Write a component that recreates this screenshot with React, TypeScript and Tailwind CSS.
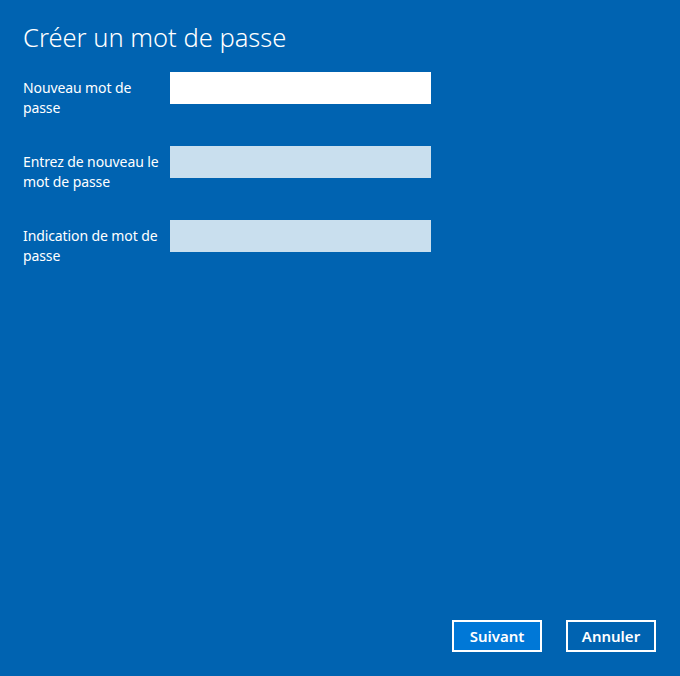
import { FC } from "react";

const font = { fontFamily: '"Noto Sans", "Open Sans", sans-serif' };

interface FieldRowProps {
  lines: string[];
  disabled?: boolean;
}

const FieldRow: FC<FieldRowProps> = ({ lines, disabled }) => (
  <div className="flex items-start">
    <label className="w-[147px] pt-[6px] text-[14px] tracking-[-0.1px] leading-[20px] text-white whitespace-nowrap">
      {lines.map((l) => (
        <span key={l} className="block">
          {l}
        </span>
      ))}
    </label>
    <input
      type="password"
      disabled={disabled}
      className={
        disabled
          ? "w-[261px] h-[32px] bg-[#c9dfee] outline-none"
          : "w-[261px] h-[32px] bg-white outline-none px-2"
      }
    />
  </div>
);

export default function App() {
  return (
    <div
      className="w-[680px] h-[676px] bg-[#0063b1] flex flex-col text-white"
      style={font}
    >
      <div className="px-[23px] pt-[20px]">
        <h1 className="text-[25.5px] leading-[34px] font-light">
          Créer un mot de passe
        </h1>
        <div className="mt-[18px] flex flex-col gap-[28px]">
          <FieldRow lines={["Nouveau mot de", "passe"]} />
          <FieldRow lines={["Entrez de nouveau le", "mot de passe"]} disabled />
          <FieldRow lines={["Indication de mot de", "passe"]} disabled />
        </div>
      </div>

      {/* boutons en bas à droite */}
      <div className="mt-auto flex justify-end gap-[24px] pr-[24px] pb-[24px]">
        <button className="w-[90px] h-[32px] border-2 border-white bg-[#0078d7] text-[15px] font-semibold text-white">
          Suivant
        </button>
        <button className="w-[90px] h-[32px] border-2 border-white bg-[#0063b1] text-[15px] font-semibold text-white">
          Annuler
        </button>
      </div>
    </div>
  );
}
